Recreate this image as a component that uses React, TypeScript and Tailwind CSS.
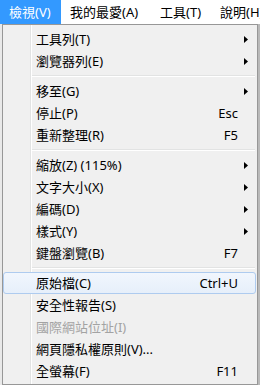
type MenuItem =
  | { kind: "sep" }
  | {
      kind: "item";
      label: string;
      shortcut?: string;
      submenu?: boolean;
      disabled?: boolean;
      hover?: boolean;
    };

const items: MenuItem[] = [
  { kind: "item", label: "工具列(T)", submenu: true },
  { kind: "item", label: "瀏覽器列(E)", submenu: true },
  { kind: "sep" },
  { kind: "item", label: "移至(G)", submenu: true },
  { kind: "item", label: "停止(P)", shortcut: "Esc" },
  { kind: "item", label: "重新整理(R)", shortcut: "F5" },
  { kind: "sep" },
  { kind: "item", label: "縮放(Z) (115%)", submenu: true },
  { kind: "item", label: "文字大小(X)", submenu: true },
  { kind: "item", label: "編碼(D)", submenu: true },
  { kind: "item", label: "樣式(Y)", submenu: true },
  { kind: "item", label: "鍵盤瀏覽(B)", shortcut: "F7" },
  { kind: "sep" },
  { kind: "item", label: "原始檔(C)", shortcut: "Ctrl+U", hover: true },
  { kind: "item", label: "安全性報告(S)" },
  { kind: "item", label: "國際網站位址(I)", disabled: true },
  { kind: "item", label: "網頁隱私權原則(V)..." },
  { kind: "item", label: "全螢幕(F)", shortcut: "F11" },
];

const menuBar = [
  { label: "檢視(V)", width: "w-[61px]", active: true },
  { label: "我的最愛(A)", width: "w-[90px]" },
  { label: "工具(T)", width: "w-[60px]" },
  { label: "說明(H)", width: "w-[49px]" },
];

function Arrow() {
  return (
    <svg width="4" height="7" viewBox="0 0 4 7" className="block">
      <path d="M0 0 L4 3.5 L0 7 Z" fill="#000" />
    </svg>
  );
}

function Row({ item }: { item: Extract<MenuItem, { kind: "item" }> }) {
  return (
    <div
      className={
        "flex h-[22px] items-center rounded-[3px] border mr-[1px] " +
        (item.hover
          ? "border-[#aecbef] bg-[linear-gradient(#f1f6fd,#e6effa)]"
          : "border-transparent")
      }
    >
      <span
        className={
          "flex-1 pl-[32px] whitespace-nowrap " +
          (item.disabled ? "text-[#a3a3a3]" : "text-black")
        }
      >
        {item.label}
      </span>
      <span className="whitespace-nowrap">{item.shortcut}</span>
      <span className="flex w-[17px] shrink-0 pl-[6px]">
        {item.submenu && <Arrow />}
      </span>
    </div>
  );
}

export default function App() {
  return (
    <div
      className="w-[260px] h-[385px] overflow-hidden bg-white text-[13px] leading-none text-black"
      style={{ fontFamily: '"Noto Sans", "Noto Sans CJK TC", sans-serif' }}
    >
      {/* menu bar */}
      <div className="flex h-[24px] bg-white">
        {menuBar.map((m) => (
          <div
            key={m.label}
            className={
              "flex shrink-0 items-center pl-[9px] whitespace-nowrap " +
              m.width +
              (m.active ? " bg-[#3399ff] text-white" : " text-black")
            }
          >
            {m.label}
          </div>
        ))}
      </div>

      {/* dropdown */}
      <div className="flex h-[361px] bg-[#e9e9e9]">
        <div className="ml-[2px] w-[256px] shrink-0 border border-[#979797] bg-[#f0f0f0] bg-[linear-gradient(to_right,transparent_27px,#e2e3e3_27px,#e2e3e3_28px,#ffffff_28px,#ffffff_29px,transparent_29px)] pt-[3px] pb-[2px]">
          {items.map((item, i) =>
            item.kind === "sep" ? (
              <div key={i} className="flex h-[8px] flex-col justify-center pl-[29px] pr-[2px]">
                <div className="h-px bg-[#e2e3e3]" />
                <div className="h-px bg-white" />
              </div>
            ) : (
              <Row key={i} item={item} />
            )
          )}
        </div>
        <div className="flex-1 bg-[#b9b9b9]" />
      </div>
    </div>
  );
}
